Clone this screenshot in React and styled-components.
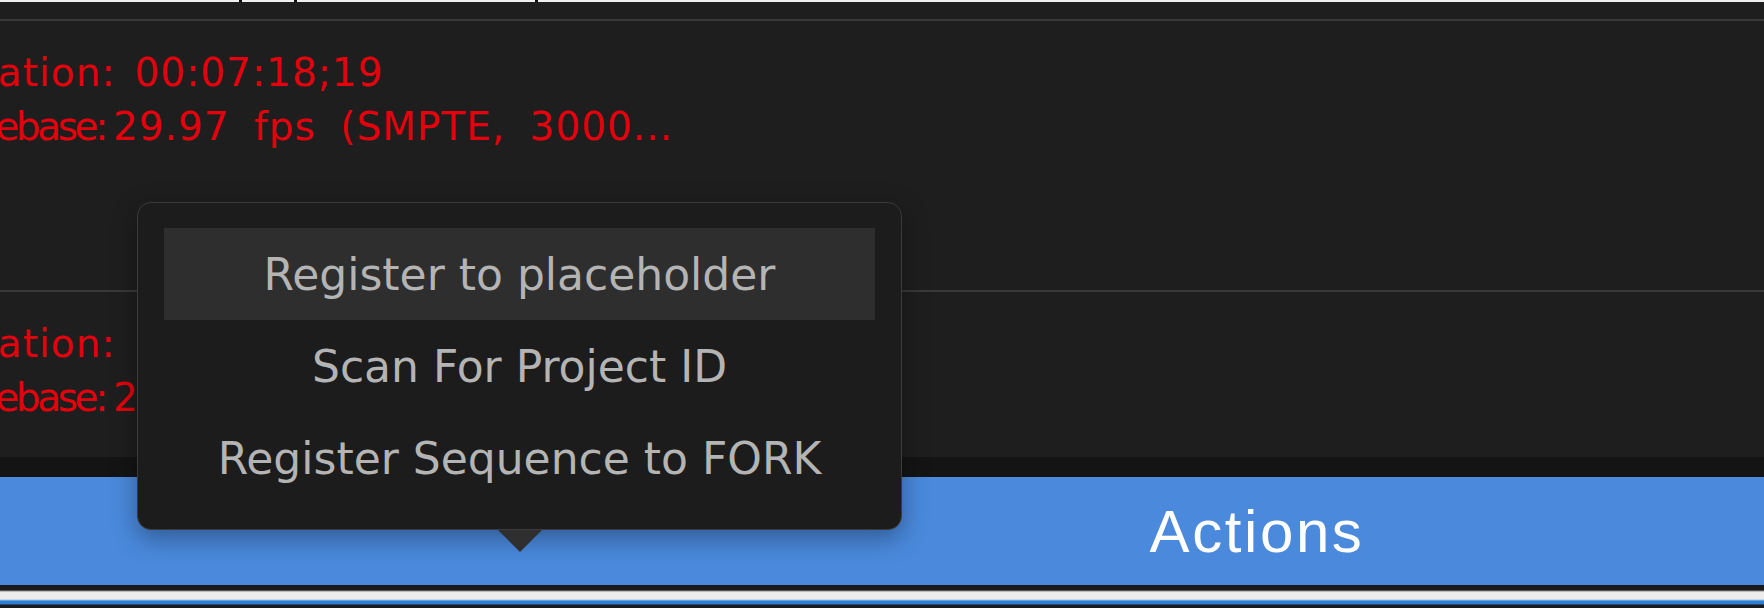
import React from "react";
import styled, { createGlobalStyle } from "styled-components";

const GlobalStyle = createGlobalStyle`
  html, body {
    margin: 0;
    padding: 0;
    background: #1e1e1e;
  }
  body {
    width: 1764px;
    height: 608px;
    overflow: hidden;
    font-family: "DejaVu Sans", "Liberation Sans", sans-serif;
  }
  * { box-sizing: border-box; }
`;

const Screen = styled.div`
  position: relative;
  width: 1764px;
  height: 608px;
  display: flex;
  flex-direction: column;
  background: #1e1e1e;
  overflow: hidden;
`;

const TopStrip = styled.div`
  flex: none;
  height: 2px;
  display: flex;
  background: #efefef;
`;

const Tick = styled.span`
  flex: none;
  width: 3px;
  height: 2px;
  margin-left: ${(p) => p.$gap}px;
  background: #101010;
`;

const HeaderGap = styled.div`
  flex: none;
  height: 17px;
`;

const Section = styled.section`
  flex: ${(p) => (p.$grow ? "1 1 auto" : "none")};
  height: ${(p) => (p.$grow ? "auto" : `${p.$height}px`)};
  border-top: 2px solid #393939;
  padding-top: 25px;
  overflow: hidden;
`;

const InfoLine = styled.div`
  display: flex;
  align-items: baseline;
  margin-left: ${(p) => p.$indent}px;
  font-family: "DejaVu Sans", sans-serif;
  font-size: 39px;
  line-height: 54px;
  color: #e4000c;
  white-space: nowrap;
`;

const InfoLabel = styled.span`
  flex: none;
  letter-spacing: ${(p) => p.$spacing}px;
  margin-right: ${(p) => p.$gap}px;
`;

const InfoValue = styled.span`
  flex: none;
  letter-spacing: 1px;
  word-spacing: 11px;
`;

const DarkStrip = styled.div`
  flex: none;
  height: 20px;
  background: #141414;
`;

const ActionBar = styled.div`
  flex: none;
  height: 108px;
  display: flex;
  align-items: center;
  justify-content: center;
  padding-left: 750px;
  background: #4a89dc;
`;

const ActionLabel = styled.span`
  font-family: "Liberation Sans", Arial, sans-serif;
  font-size: 60px;
  letter-spacing: 2.6px;
  color: #ffffff;
`;

const BottomStripes = styled.div`
  flex: none;
  height: 23px;
  background: linear-gradient(
    to bottom,
    #1a1a1a 0px,
    #1a1a1a 5px,
    #8a8a8a 6px,
    #ececec 7px,
    #ececec 14px,
    #a9c6e3 15px,
    #2b7fd6 16px,
    #2b7fd6 19px,
    #1a1a1a 20px,
    #1a1a1a 23px
  );
`;

const Popup = styled.div`
  position: absolute;
  left: 137px;
  top: 202px;
  width: 765px;
  height: 328px;
  padding: 25px 26px;
  border: 1px solid #3b3b3b;
  border-radius: 14px;
  background: #1c1c1c;
  box-shadow: 0 8px 26px rgba(0, 0, 0, 0.35);
  display: flex;
  flex-direction: column;

  &::after {
    content: "";
    position: absolute;
    left: 50%;
    top: calc(100% + 1px);
    transform: translateX(-50%);
    border-left: 22px solid transparent;
    border-right: 22px solid transparent;
    border-top: 22px solid #2f2f2f;
  }
`;

const MenuItem = styled.div`
  flex: none;
  height: 92px;
  display: flex;
  align-items: center;
  justify-content: center;
  font-family: "DejaVu Sans", sans-serif;
  font-size: 44px;
  color: #b4b4b4;
  background: ${(p) => (p.$active ? "#2e2e2e" : "transparent")};
  white-space: nowrap;
`;

const infoLines = [
  { label: "Duration:", value: "00:07:18;19", indent: -76, spacing: 1, gap: 19 },
  {
    label: "Timebase:",
    value: "29.97 fps (SMPTE, 3000...",
    indent: -66,
    spacing: -3.4,
    gap: 8,
  },
];

const menu = [
  { label: "Register to placeholder", active: true },
  { label: "Scan For Project ID" },
  { label: "Register Sequence to FORK" },
];

function InfoBlock() {
  return infoLines.map((l) => (
    <InfoLine key={l.label} $indent={l.indent}>
      <InfoLabel $spacing={l.spacing} $gap={l.gap}>
        {l.label}
      </InfoLabel>
      <InfoValue>{l.value}</InfoValue>
    </InfoLine>
  ));
}

export default function App() {
  return (
    <Screen>
      <GlobalStyle />
      <TopStrip>
        <Tick $gap={239} />
        <Tick $gap={52} />
        <Tick $gap={238} />
      </TopStrip>
      <HeaderGap />
      <Section $height={271}>
        <InfoBlock />
      </Section>
      <Section $grow>
        <InfoBlock />
      </Section>
      <DarkStrip />
      <ActionBar>
        <ActionLabel>Actions</ActionLabel>
      </ActionBar>
      <BottomStripes />
      <Popup>
        {menu.map((m) => (
          <MenuItem key={m.label} $active={m.active}>
            {m.label}
          </MenuItem>
        ))}
      </Popup>
    </Screen>
  );
}
